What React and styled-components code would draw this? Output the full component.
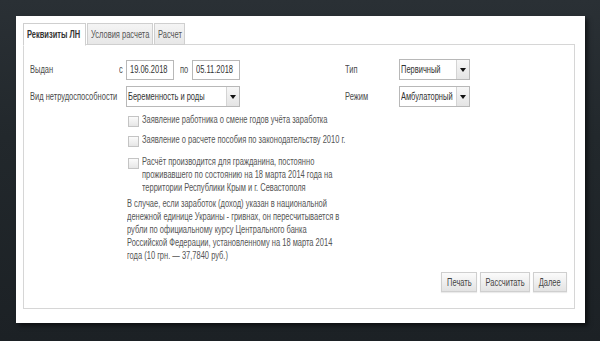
import React from "react";
import styled, { createGlobalStyle } from "styled-components";

const Global = createGlobalStyle`
  html, body { margin: 0; padding: 0; }
  body {
    width: 600px; height: 341px; overflow: hidden;
    background: linear-gradient(180deg, #2a3035 0%, #22282c 40%, #1c2125 100%);
    font-family: "Liberation Sans", Arial, sans-serif;
  }
`;

/* The source UI uses a narrow face; Liberation Sans squeezed to 75% matches it. */
const Narrow = styled.span`
  display: inline-block;
  white-space: nowrap;
  transform: scaleX(0.75);
  transform-origin: ${(p) => (p.$center ? "center" : "left")} center;
`;

const Screen = styled.div`
  width: 600px;
  height: 341px;
  box-sizing: border-box;
  padding: 16px 15px 18px 16px;
`;

const Panel = styled.div`
  width: 569px;
  height: 307px;
  box-sizing: border-box;
  background: #fff;
  padding: 7px 10px 14px 7px;
  display: flex;
  flex-direction: column;
  box-shadow: 3px 3px 4px rgba(0, 0, 0, 0.5);
`;

const TabBar = styled.div`
  display: flex;
  gap: 1px;
  height: 22px;
  position: relative;
  z-index: 1;
`;

const Tab = styled.div`
  box-sizing: border-box;
  height: ${(p) => (p.$active ? "23px" : "22px")};
  width: ${(p) => p.$w}px;
  border: 1px solid #cfcfcf;
  border-bottom: 1px solid ${(p) => (p.$active ? "#fff" : "#cfcfcf")};
  background: ${(p) => (p.$active ? "#fff" : "linear-gradient(#f4f4f4, #e7e7e7)")};
  color: ${(p) => (p.$active ? "#333" : "#555")};
  font-weight: ${(p) => (p.$active ? "bold" : "normal")};
  font-size: 10px;
  display: flex;
  align-items: center;
  padding: 0 0 ${(p) => (p.$active ? "1px" : "0")} 3px;
  overflow: hidden;
`;

const Box = styled.div`
  flex: 1;
  border: 1px solid #d6d6d6;
  margin-top: -1px;
  box-sizing: border-box;
  padding: 14px 7px 16px 6px;
  display: flex;
  flex-direction: column;
`;

const Grid = styled.div`
  display: grid;
  grid-template-columns: 96px 114px 105px 54px 71px;
  grid-auto-rows: 21px;
  row-gap: 6px;
  align-items: center;
  font-size: 10px;
  color: #4a4a4a;
`;

const Label = styled.div`
  color: #4a4a4a;
`;

const Dates = styled.div`
  display: flex;
  align-items: center;
  margin-left: -7px;
`;

const Prep = styled.span`
  box-sizing: border-box;
  width: ${(p) => p.$w}px;
  padding-left: ${(p) => p.$pl || 0}px;
  color: #4a4a4a;
`;

const Input = styled.div`
  box-sizing: border-box;
  width: 48px;
  height: 20px;
  border: 1px solid #b8b8b8;
  background: #fff;
  display: flex;
  align-items: center;
  padding-left: 3px;
  color: #333;
  font-size: 10px;
`;

const Select = styled.div`
  box-sizing: border-box;
  width: ${(p) => p.$w}px;
  height: 21px;
  border: 1px solid #b8b8b8;
  background: #fff;
  display: flex;
  align-items: stretch;
  color: #333;
  font-size: 10px;
`;

const SelectText = styled.div`
  flex: 1;
  display: flex;
  align-items: center;
  padding-left: 1px;
  overflow: hidden;
`;

const Arrow = styled.div`
  width: 12px;
  flex: none;
  border-left: 1px solid #d4d4d4;
  background: linear-gradient(#f7f7f7, #e4e4e4);
  display: flex;
  align-items: center;
  justify-content: center;
  &::after {
    content: "";
    border-left: 3px solid transparent;
    border-right: 3px solid transparent;
    border-top: 4px solid #111;
  }
`;

const Options = styled.div`
  margin-left: 96px;
  width: 222px;
  display: flex;
  flex-direction: column;
  font-size: 10px;
  line-height: 13px;
  color: #555;
  margin-top: 6px;
`;

const Check = styled.div`
  display: flex;
  align-items: flex-start;
  margin-top: ${(p) => p.$mt}px;
`;

const CheckBox = styled.span`
  box-sizing: border-box;
  width: 11px;
  height: 11px;
  flex: none;
  margin: 3px 3px 0 2px;
  border: 1px solid #c4c4c4;
  background: linear-gradient(#fbfbfb, #e6e6e6);
`;

const Note = styled.div`
  margin: 3px 0 0 1px;
`;

const Buttons = styled.div`
  margin-top: auto;
  display: flex;
  justify-content: flex-end;
  gap: 3px;
`;

const Button = styled.div`
  box-sizing: border-box;
  height: 20px;
  width: ${(p) => p.$w}px;
  border: 1px solid #cfcfcf;
  background: linear-gradient(#fbfbfb, #e3e3e3);
  color: #444;
  font-size: 10px;
  display: flex;
  align-items: center;
  justify-content: center;
  box-shadow: 0 1px 1px rgba(0, 0, 0, 0.08);
`;

export default function App() {
  return (
    <>
      <Global />
      <Screen>
        <Panel>
          <TabBar>
            <Tab $active $w={63}><Narrow>Реквизиты ЛН</Narrow></Tab>
            <Tab $w={66}><Narrow>Условия расчета</Narrow></Tab>
            <Tab $w={31}><Narrow>Расчет</Narrow></Tab>
          </TabBar>
          <Box>
            <Grid>
              <Label><Narrow>Выдан</Narrow></Label>
              <Dates>
                <Prep $w={7}><Narrow>с</Narrow></Prep>
                <Input><Narrow>19.06.2018</Narrow></Input>
                <Prep $w={18} $pl={6}><Narrow>по</Narrow></Prep>
                <Input><Narrow>05.11.2018</Narrow></Input>
              </Dates>
              <span />
              <Label><Narrow>Тип</Narrow></Label>
              <Select $w={71}>
                <SelectText><Narrow>Первичный</Narrow></SelectText>
                <Arrow />
              </Select>

              <Label><Narrow>Вид нетрудоспособности</Narrow></Label>
              <Select $w={114}>
                <SelectText><Narrow>Беременность и роды</Narrow></SelectText>
                <Arrow />
              </Select>
              <span />
              <Label><Narrow>Режим</Narrow></Label>
              <Select $w={71}>
                <SelectText><Narrow>Амбулаторный</Narrow></SelectText>
                <Arrow />
              </Select>
            </Grid>
            <Options>
              <Check $mt={0}>
                <CheckBox />
                <Narrow>Заявление работника о смене годов учёта заработка</Narrow>
              </Check>
              <Check $mt={6}>
                <CheckBox />
                <Narrow>Заявление о расчете пособия по законодательству 2010 г.</Narrow>
              </Check>
              <Check $mt={8}>
                <CheckBox />
                <Narrow>
                  Расчёт производится для гражданина, постоянно<br />
                  проживавшего по состоянию на 18 марта 2014 года на<br />
                  территории Республики Крым и г. Севастополя
                </Narrow>
              </Check>
              <Note>
                <Narrow>
                  В случае, если заработок (доход) указан в национальной<br />
                  денежной единице Украины - гривнах, он пересчитывается в<br />
                  рубли по официальному курсу Центрального банка<br />
                  Российской Федерации, установленному на 18 марта 2014<br />
                  года (10 грн. — 37,7840 руб.)
                </Narrow>
              </Note>
            </Options>
            <Buttons>
              <Button $w={36}><Narrow $center>Печать</Narrow></Button>
              <Button $w={50}><Narrow $center>Рассчитать</Narrow></Button>
              <Button $w={34}><Narrow $center>Далее</Narrow></Button>
            </Buttons>
          </Box>
        </Panel>
      </Screen>
    </>
  );
}
